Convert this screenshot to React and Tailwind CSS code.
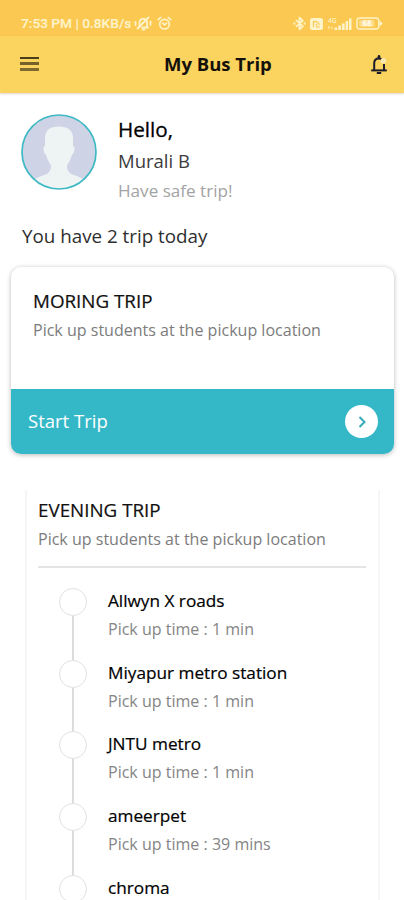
import { Fragment } from "react";

const stops = [
  { name: "Allwyn X roads", time: "1 min" },
  { name: "Miyapur metro station", time: "1 min" },
  { name: "JNTU metro", time: "1 min" },
  { name: "ameerpet", time: "39 mins" },
  { name: "chroma" },
];

function MutedBell() {
  return (
    <svg className="w-[18px] h-[15px]" viewBox="0 0 18 15" fill="none" stroke="currentColor" strokeWidth="1.8" strokeLinecap="round" strokeLinejoin="round">
      <path d="M5.500 10.500V6.200a3.800 3.800 0 0 1 7.500-.4v4.700l1 1H8" />
      <path d="M8.500 13.500h2M14.500 1.500 3.500 12.500M1.500 6v3M16.500 5.500v3.500" />
    </svg>
  );
}

function AlarmClock() {
  return (
    <svg className="w-[15px] h-[15px]" viewBox="0 0 15 15" fill="none" stroke="currentColor" strokeWidth="1.7" strokeLinecap="round">
      <circle cx="7.5" cy="8.200" r="4.800" />
      <path d="M1.200 3.600 3.800 1.400M13.800 3.600l-2.600-2.200M5.600 7.200l2 1.600 2-1.600" />
    </svg>
  );
}

function Bluetooth() {
  return (
    <svg className="w-[13px] h-[15px]" viewBox="0 0 13 15" fill="none" stroke="currentColor" strokeWidth="1.8" strokeLinejoin="round">
      <path d="M3 4.200l6.800 6.200-3.300 3V1.600l3.300 3L3 10.800" />
      <path d="M.4 7.500h2M10.600 7.500h2" strokeWidth="2.200" />
    </svg>
  );
}

function Nfc() {
  return (
    <svg className="w-[13px] h-[12px]" viewBox="0 0 13 12">
      <rect width="13" height="12" rx="2.500" fill="currentColor" />
      <path d="M3.400 9V3.600h3l3.400 3M6 9h3.800M5.600 6.200l2 1.800" fill="none" stroke="#fbc851" strokeWidth="1.100" />
    </svg>
  );
}

function Signal() {
  return (
    <svg className="w-[25px] h-[14px]" viewBox="0 0 25 14" fill="currentColor">
      <text x="1" y="6" fontSize="6.500" fontWeight="600">4G</text>
      <path d="M1 9h2v3H1zM4 10h2v2H4z" opacity=".5" />
      <path d="M7.500 10.500h2.700v2.500h-2.700zM11.200 8.500h2.700v4.500h-2.700zM14.900 6.500h2.700v6.500h-2.700zM18.600 4h2.500v9h-2.500zM22 1.500h2.500v11.500H22z" />
    </svg>
  );
}

function Battery() {
  return (
    <svg className="w-[27px] h-[13px]" viewBox="0 0 27 13">
      <path d="M3.500 1h16.500c2 0 2.500 1 2.800 2.200v6.600c-.3 1.200-.8 2.200-2.800 2.200H3.500C1.800 12 1 11 1 9.500v-6C1 2 1.800 1 3.500 1z" fill="none" stroke="currentColor" strokeWidth="1.400" />
      <rect x="3.200" y="3.200" width="15" height="6.600" rx="1" fill="currentColor" opacity=".5" />
      <path d="M23.500 3.500 26.800 6.500l-3.300 3z" fill="currentColor" />
      <text x="6.500" y="9.400" fontSize="8" fontWeight="700" fill="#fffdf2">68</text>
    </svg>
  );
}

function Bell() {
  return (
    <svg className="w-[18px] h-[21px]" viewBox="0 0 18 21" fill="none" stroke="#1d1d2b">
      <path d="M4.200 16V9.200C4.200 6.200 6 4.400 8.800 4.400c1.200 0 2.200.3 3 .9M14 10v6" strokeWidth="2" />
      <path d="M1.200 16.400h15.600" strokeWidth="2" />
      <path d="M9 2.200v1.800" strokeWidth="2.600" strokeLinecap="round" />
      <path d="M6.800 19h4.400" strokeWidth="2" />
      <circle cx="13.400" cy="6.800" r="2.800" fill="#fbe7b0" stroke="none" />
    </svg>
  );
}

function Avatar() {
  return (
    <svg className="w-[76px] h-[76px]" viewBox="0 0 76 76">
      <clipPath id="face">
        <circle cx="38" cy="38" r="37" />
      </clipPath>
      <g clipPath="url(#face)">
        <rect width="76" height="76" fill="#ced3e6" />
        <path d="M38 12.500c9 0 14.500 4 14 12.500v7c1.600.5 1.800 2.500 1.200 5-.6 2.500-1.400 3.500-2.400 4-1.200 5-3.300 8-4.800 10.500 0 5 2 7.500 5.500 9 7 2.500 12 4.500 15.500 8v10H9V68.500c3.500-3.500 8.500-5.500 15.500-8 3.500-1.500 5.500-4 5.500-9-1.500-2.500-3.600-5.500-4.800-10.500-1-.5-1.800-1.500-2.400-4-.6-2.500-.4-4.500 1.200-5v-7c-.5-8.500 5-12.500 14-12.500z" fill="#eef4f4" />
      </g>
      <circle cx="38" cy="38" r="37" fill="none" stroke="#3fbac4" strokeWidth="1.700" />
    </svg>
  );
}

function TripHeading({ title }) {
  return (
    <>
      <h2 className="text-[18.8px] leading-[26px] text-[#111] [-webkit-text-stroke:0.2px]">{title}</h2>
      <p className="mt-[3px] text-[16.05px] leading-[26px] text-[#7c7c7c]">Pick up students at the pickup location</p>
    </>
  );
}

export default function App() {
  return (
    <div className="h-[900px] w-[404px] overflow-hidden bg-white font-['Open_Sans',sans-serif] whitespace-nowrap">
      <div className="flex h-9 items-end justify-between bg-[#fbc851] pr-[21px] pl-[21px] pb-[5px] text-[#fff3c9]">
        <div className="flex items-center">
          <span className="w-[113px] font-[Roboto,sans-serif] text-[13.7px] leading-4 font-medium [-webkit-text-stroke:0.2px]">7:53 PM | 0.8KB/s</span>
          <MutedBell />
          <span className="w-[5px]" />
          <AlarmClock />
        </div>
        <div className="flex items-center gap-[4px]">
          <Bluetooth />
          <Nfc />
          <Signal />
          <Battery />
        </div>
      </div>

      <header className="grid h-[57px] grid-cols-[144px_1fr_18px] items-center bg-[#fbd35f] pr-[16px] pl-5 shadow-[0_1px_2px_rgba(120,80,60,0.25)]">
        <div className="flex w-[19px] flex-col gap-[3px] pb-[2px]">
          <span className="h-[2px] bg-[#4b3f1b]" />
          <span className="h-[3px] bg-[#75622b]" />
          <span className="h-[3px] bg-[#7d6a30]" />
        </div>
        <h1 className="pb-[2px] text-[18.5px] leading-6 font-bold text-[#14110a]">My Bus Trip</h1>
        <Bell />
      </header>

      <section className="flex pt-[21px] pl-[21px]">
        <Avatar />
        <div className="ml-[21px]">
          <p className="text-[20.7px] leading-[30px] font-medium text-black [-webkit-text-stroke:0.3px]">Hello,</p>
          <p className="mt-[2px] text-[18.5px] leading-[30px] text-[#3c3c3c]">Murali B</p>
          <p className="text-[17.1px] leading-[29px] text-[#a3a3a3]">Have safe trip!</p>
        </div>
      </section>

      <p className="mt-[17px] pl-[22px] text-[18.8px] leading-[28px] text-[#2e2e2e]">You have 2 trip today</p>

      <section className="mx-[11px] mt-[17px] w-[383px] overflow-hidden rounded-[10px] bg-white shadow-[0_1px_5px_rgba(0,0,0,0.28)]">
        <div className="h-[122px] pt-[21px] pl-[22px]">
          <TripHeading title="MORING TRIP" />
        </div>
        <button className="flex h-[65px] w-full items-center justify-between bg-[#34b7c7] pr-4 pl-[17px]">
          <span className="pb-[2px] text-[18.5px] leading-[26px] text-white">Start Trip</span>
          <span className="flex size-[33px] items-center justify-center rounded-full bg-white">
            <svg className="size-[14px]" viewBox="0 0 14 14" fill="none" stroke="#34a9b8" strokeWidth="2">
              <path d="M4.500 2l5 5-5 5" />
            </svg>
          </span>
        </button>
      </section>

      <section className="mt-[36px] ml-[25px] h-[420px] w-[355px] border-x-2 border-[#f6f6f6] pt-[7px] pr-[12px] pl-[11px]">
        <TripHeading title="EVENING TRIP" />
        <div className="mt-[14px] h-[2px] bg-[#e4e4e4]" />
        <div className="mt-5 grid grid-cols-[28px_1fr] gap-x-[21px] pl-[21px]">
          {stops.map((stop) => (
            <Fragment key={stop.name}>
              <div className="flex h-[71.7px] flex-col items-center">
                <span className="size-7 shrink-0 rounded-full border-[1.5px] border-[#e1e1e1] bg-white" />
                <span className="w-[2px] grow bg-[#dcdcdc]" />
              </div>
              <div>
                <p className="text-[17.2px] leading-[26px] font-medium text-black [-webkit-text-stroke:0.2px]">{stop.name}</p>
                {stop.time && (
                  <p className="mt-[2px] text-[16.05px] leading-[26px] text-[#858585]">Pick up time : {stop.time}</p>
                )}
              </div>
            </Fragment>
          ))}
        </div>
      </section>
    </div>
  );
}
